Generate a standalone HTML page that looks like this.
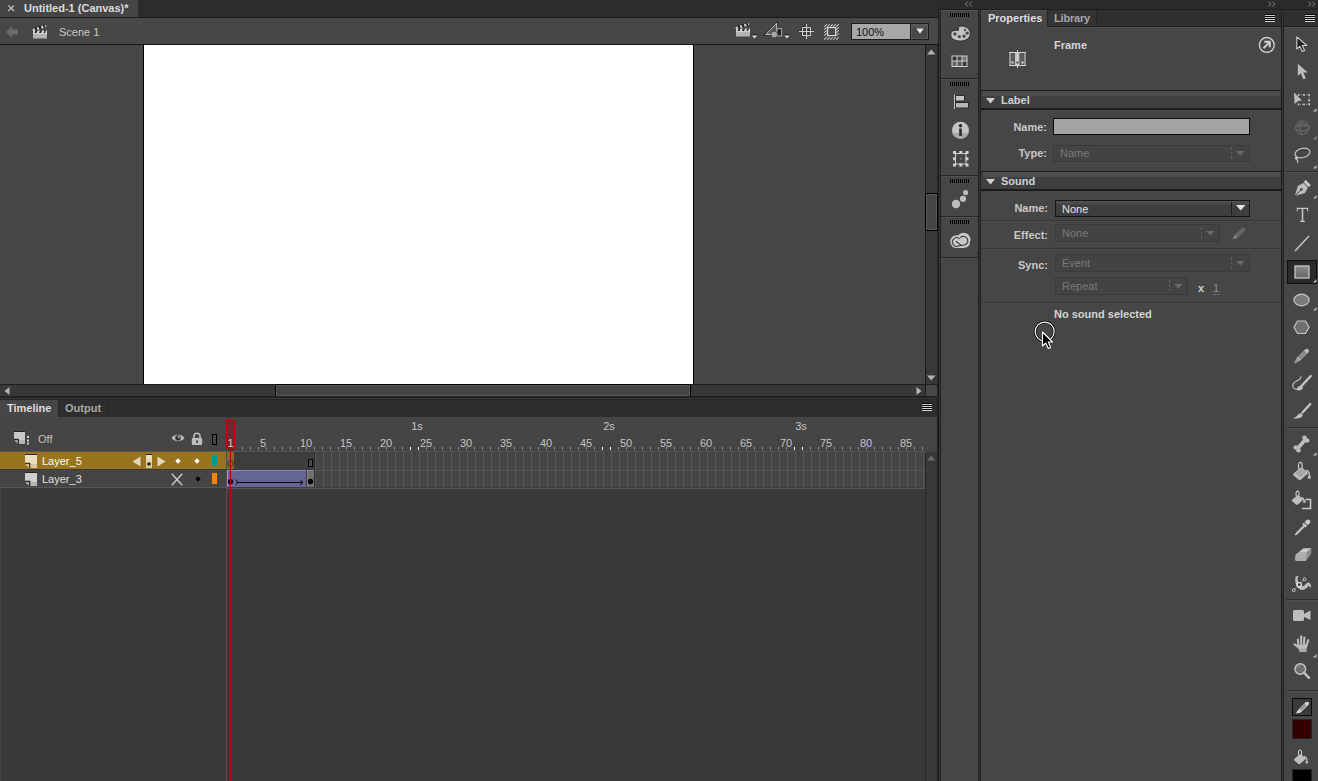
<!DOCTYPE html>
<html><head><meta charset="utf-8">
<style>
*{margin:0;padding:0;box-sizing:border-box}
html,body{width:1318px;height:781px;overflow:hidden;background:#2b2b2b;font-family:"Liberation Sans",sans-serif;font-size:11px;color:#d0d0d0}
.a{position:absolute}
.t{position:absolute;white-space:nowrap;line-height:1}
svg{position:absolute;overflow:visible}
.b{font-weight:bold}
</style></head><body>
<!-- ========== LEFT: document tab bar ========== -->
<div class="a" style="left:0;top:0;width:938px;height:17px;background:#2c2c2c"></div>
<div class="a" style="left:0;top:0;width:138px;height:17px;background:#454545"></div>
<svg style="left:7px;top:4px" width="8" height="8"><path d="M1.3 1.3L7 7M7 1.3L1.3 7" stroke="#c4c4c4" stroke-width="1.2"/></svg>
<div class="t b" style="left:24px;top:3px;color:#dcdcdc">Untitled-1 (Canvas)*</div>
<div class="a" style="left:0;top:17px;width:938px;height:1px;background:#1c1c1c"></div>
<!-- main toolbar -->
<div class="a" style="left:0;top:18px;width:938px;height:26px;background:#474747"></div>
<svg style="left:6px;top:26px" width="13" height="12"><path d="M0 6L6 0V3.5H12V8.5H6V12Z" fill="#6b6b6b"/></svg>
<svg style="left:31px;top:23px" width="18" height="17">
 <path d="M2 10H16V15.5H2Z" fill="#b4b4b4"/><path d="M2 10H16V11H2Z" fill="#d0d0d0"/>
 <path d="M2 7.6H16V10H2Z" fill="#1e1e1e"/>
 <path d="M2 7.6H4.5L3.5 10H2Z M6.5 7.6H9L8 10H5.5Z M11 7.6H13.5L12.5 10H10Z M15 7.6H16V10H14Z" fill="#d8d8d8"/>
 <path d="M1 5.5L14.5 1.2L15.5 4L2 8.3Z" fill="#1e1e1e"/>
 <path d="M1.3 6L3.5 5.3L4.5 7.8L2.1 8.3Z M5.5 4.6L7.6 4L8.6 6.5L6.5 7.1Z M9.7 3.3L11.8 2.6L12.8 5.1L10.7 5.8Z M13.5 2L14.5 1.7L15.4 4L14.5 4.4Z" fill="#d0d0d0"/>
</svg>
<div class="t" style="left:59px;top:27px;color:#c8c8c8">Scene 1</div>
<!-- right toolbar icons -->
<svg style="left:734px;top:21px" width="26" height="20">
 <path d="M2 10H16V15.5H2Z" fill="#b4b4b4"/><path d="M2 10H16V11H2Z" fill="#d0d0d0"/>
 <path d="M2 7.6H16V10H2Z" fill="#1e1e1e"/>
 <path d="M2 7.6H4.5L3.5 10H2Z M6.5 7.6H9L8 10H5.5Z M11 7.6H13.5L12.5 10H10Z M15 7.6H16V10H14Z" fill="#d8d8d8"/>
 <path d="M1 5.5L14.5 1.2L15.5 4L2 8.3Z" fill="#1e1e1e"/>
 <path d="M1.3 6L3.5 5.3L4.5 7.8L2.1 8.3Z M5.5 4.6L7.6 4L8.6 6.5L6.5 7.1Z M9.7 3.3L11.8 2.6L12.8 5.1L10.7 5.8Z M13.5 2L14.5 1.7L15.4 4L14.5 4.4Z" fill="#d0d0d0"/>
 <path d="M17.5 13.8H23.5" stroke="#1e1e1e" stroke-width="1"/><path d="M17.8 14.5H23.2L20.5 17.5Z" fill="#d8d8d8"/>
</svg>
<svg style="left:764px;top:21px" width="27" height="20">
 <path d="M1.8 13.5L12.6 2.2V13.5Z" fill="#555" stroke="#1e1e1e" stroke-width="2"/>
 <path d="M1.8 13.5L12.6 2.2V13.5Z" fill="#5a5a5a" stroke="#c4c4c4" stroke-width="1"/>
 <rect x="12.9" y="7.7" width="4.7" height="7.2" fill="#222" stroke="#aaa" stroke-width="1"/>
 <circle cx="10.3" cy="13.5" r="3.3" fill="#a8a8a8" stroke="#1e1e1e" stroke-width="0.5"/>
 <path d="M20 13.8H26" stroke="#1e1e1e" stroke-width="1"/><path d="M20.3 14.5H25.7L23 17.5Z" fill="#d8d8d8"/>
</svg>
<svg style="left:798px;top:23px" width="18" height="18">
 <path d="M4.5 4.5H12.5V12.5H4.5Z M8.5 1V16 M1 8.5H16" fill="none" stroke="#111" stroke-width="1" opacity="0.6" transform="translate(-0.6,-0.6)"/>
 <path d="M4.5 4.5H12.5V12.5H4.5Z M8.5 1V16 M1 8.5H16" fill="none" stroke="#d2d2d2" stroke-width="1"/>
</svg>
<svg style="left:824px;top:24px" width="16" height="16">
 <path d="M0.5 15.5L15.5 0.5" stroke="#444" stroke-width="0"/>
 <g stroke="#c8c8c8" stroke-width="1.1">
  <path d="M0.3 2.7L2.7 0.3M3.3 2.7L5.7 0.3M6.3 2.7L8.7 0.3M9.3 2.7L11.7 0.3M12.3 2.7L14.7 0.3"/>
  <path d="M0.3 15.7L2.7 13.3M3.3 15.7L5.7 13.3M6.3 15.7L8.7 13.3M9.3 15.7L11.7 13.3M12.3 15.7L14.7 13.3"/>
  <path d="M0.3 5.7L2.7 3.3M0.3 8.7L2.7 6.3M0.3 11.7L2.7 9.3"/>
  <path d="M12.3 5.7L14.7 3.3M12.3 8.7L14.7 6.3M12.3 11.7L14.7 9.3"/>
 </g>
 <rect x="3.6" y="3.6" width="8" height="8" fill="none" stroke="#d8d8d8" stroke-width="1.2"/>
</svg>
<div class="a" style="left:851px;top:23px;width:78px;height:17px;background:#1c1c1c"></div>
<div class="a" style="left:852px;top:24px;width:58px;height:15px;background:#a8a8a8"></div>
<div class="a" style="left:911px;top:24px;width:17px;height:15px;background:linear-gradient(#555 0,#555 3px,#474747 4px);box-shadow:inset 0 0 0 1px #5a5a5a"></div>
<svg style="left:916px;top:28px" width="9" height="7"><path d="M0.2 0.5H7.8L4 5.8Z" fill="#e6e6e6"/></svg>
<div class="t" style="left:856px;top:27px;color:#111">100%</div>
<div class="a" style="left:0;top:44px;width:938px;height:1px;background:#161616"></div>
<!-- stage area -->
<div class="a" style="left:0;top:45px;width:925px;height:339px;background:#464646"></div>
<div class="a" style="left:143px;top:45px;width:551px;height:339px;background:#000"></div>
<div class="a" style="left:144px;top:45px;width:549px;height:339px;background:#fff"></div>
<!-- v scrollbar -->
<div class="a" style="left:925px;top:45px;width:13px;height:340px;background:#383838"></div>
<div class="a" style="left:937px;top:45px;width:1px;height:355px;background:#262626"></div>
<svg style="left:927px;top:49px" width="9" height="6"><path d="M0 5.5H8.5L4.25 0.5Z" fill="#b4b4b4"/></svg>
<div class="a" style="left:925px;top:45px;width:1px;height:340px;background:#1e1e1e"></div>
<div class="a" style="left:925px;top:193px;width:13px;height:38px;background:#454545;border:1px solid #000;box-shadow:inset 0 0 0 1px #595959"></div>
<svg style="left:927px;top:375px" width="9" height="6"><path d="M0 0.5H8.5L4.25 5.5Z" fill="#b4b4b4"/></svg>
<!-- h scrollbar -->
<div class="a" style="left:0;top:384px;width:938px;height:1px;background:#1e1e1e"></div>
<div class="a" style="left:0;top:385px;width:925px;height:11px;background:#383838"></div>
<svg style="left:4px;top:387px" width="6" height="8"><path d="M5.5 0V8L0.5 4Z" fill="#b4b4b4"/></svg>
<div class="a" style="left:275px;top:384px;width:416px;height:13px;background:#454545;border:1px solid #000;box-shadow:inset 0 0 0 1px #595959"></div>
<svg style="left:916px;top:387px" width="6" height="8"><path d="M0.5 0V8L5.5 4Z" fill="#b4b4b4"/></svg>
<div class="a" style="left:925px;top:384px;width:13px;height:13px;background:#474747;border:1px solid #1e1e1e"></div>
<div class="a" style="left:0;top:396px;width:938px;height:2px;background:#222"></div>
<div class="a" style="left:0;top:398px;width:938px;height:1px;background:#383838"></div>
<div class="a" style="left:0;top:399px;width:938px;height:1px;background:#262626"></div>
<!-- timeline tab bar -->
<div class="a" style="left:0;top:400px;width:938px;height:17px;background:#2e2e2e"></div>
<div class="a" style="left:0;top:400px;width:58px;height:17px;background:#464646"></div>
<div class="a" style="left:58px;top:400px;width:1px;height:17px;background:#262626"></div>
<div class="a" style="left:107px;top:400px;width:1px;height:17px;background:#262626"></div>
<div class="t b" style="left:7px;top:403px;color:#dcdcdc">Timeline</div>
<div class="t b" style="left:65px;top:403px;color:#a8a8a8">Output</div>
<svg style="left:922px;top:403px" width="11" height="9"><path d="M0 0.5H10M0 2.5H10M0 4.5H10M0 6.5H10" stroke="#000" stroke-width="1"/><path d="M0 1.5H10M0 3.5H10M0 5.5H10M0 7.5H10" stroke="#d0d0d0" stroke-width="1"/></svg>
<!-- timeline body -->
<div class="a" style="left:0;top:417px;width:938px;height:364px;background:#393939"></div>
<div class="a" style="left:0;top:488px;width:1px;height:293px;background:#464646"></div>
<div class="a" style="left:0;top:417px;width:925px;height:35px;background:#454545"></div>
<!-- header icons -->
<svg style="left:13px;top:431px" width="18" height="14">
 <rect x="1" y="0" width="11" height="1" fill="#222"/>
 <path d="M1 1H12V13H5.5V8H1Z" fill="#c8c8c8"/><rect x="5.5" y="9" width="6.5" height="4" fill="#b4b4b4"/>
 <path d="M1 7.8H5.8V13H4.8V8.8H1Z" fill="#222"/><path d="M1.3 9.2H4.5V12.6Z" fill="#c0c0c0"/>
 <rect x="14" y="5" width="2" height="2" fill="#d0d0d0"/><rect x="14" y="8.5" width="2" height="2" fill="#d0d0d0"/><rect x="14" y="11.5" width="2" height="2" fill="#d0d0d0"/>
</svg>
<div class="t" style="left:38px;top:434px;color:#c0c0c0">Off</div>
<svg style="left:171px;top:433px" width="14" height="10">
 <path d="M0.7 5C3 0.8 11 0.8 13.3 5C11 9.2 3 9.2 0.7 5Z" fill="#bdbdbd"/>
 <circle cx="7" cy="5" r="2.8" fill="#3a3a3a"/><circle cx="7.8" cy="4" r="0.9" fill="#bdbdbd"/>
</svg>
<svg style="left:191px;top:432px" width="12" height="14">
 <path d="M3 6.5V4.2A3 3 0 0 1 9 4.2V6.5" fill="none" stroke="#bdbdbd" stroke-width="1.6"/>
 <rect x="0.8" y="6" width="10.4" height="7" rx="1" fill="#bdbdbd"/>
 <rect x="5.3" y="8.3" width="1.5" height="2.6" fill="#333"/>
</svg>
<div class="a" style="left:212px;top:434px;width:5px;height:11px;border:1px solid #000"></div>

<div class="t" style="left:260px;top:438px;color:#c4c4c4">5</div>
<div class="t" style="left:300px;top:438px;color:#c4c4c4">10</div>
<div class="t" style="left:340px;top:438px;color:#c4c4c4">15</div>
<div class="t" style="left:380px;top:438px;color:#c4c4c4">20</div>
<div class="t" style="left:420px;top:438px;color:#c4c4c4">25</div>
<div class="t" style="left:460px;top:438px;color:#c4c4c4">30</div>
<div class="t" style="left:500px;top:438px;color:#c4c4c4">35</div>
<div class="t" style="left:540px;top:438px;color:#c4c4c4">40</div>
<div class="t" style="left:580px;top:438px;color:#c4c4c4">45</div>
<div class="t" style="left:620px;top:438px;color:#c4c4c4">50</div>
<div class="t" style="left:660px;top:438px;color:#c4c4c4">55</div>
<div class="t" style="left:700px;top:438px;color:#c4c4c4">60</div>
<div class="t" style="left:740px;top:438px;color:#c4c4c4">65</div>
<div class="t" style="left:780px;top:438px;color:#c4c4c4">70</div>
<div class="t" style="left:820px;top:438px;color:#c4c4c4">75</div>
<div class="t" style="left:860px;top:438px;color:#c4c4c4">80</div>
<div class="t" style="left:900px;top:438px;color:#c4c4c4">85</div>
<div class="a" style="left:234px;top:447px;width:1px;height:3px;background:#8a8a8a"></div>
<div class="a" style="left:242px;top:447px;width:1px;height:3px;background:#8a8a8a"></div>
<div class="a" style="left:250px;top:447px;width:1px;height:3px;background:#8a8a8a"></div>
<div class="a" style="left:258px;top:447px;width:1px;height:3px;background:#8a8a8a"></div>
<div class="a" style="left:266px;top:447px;width:1px;height:3px;background:#8a8a8a"></div>
<div class="a" style="left:274px;top:447px;width:1px;height:3px;background:#8a8a8a"></div>
<div class="a" style="left:282px;top:447px;width:1px;height:3px;background:#8a8a8a"></div>
<div class="a" style="left:290px;top:447px;width:1px;height:3px;background:#8a8a8a"></div>
<div class="a" style="left:298px;top:447px;width:1px;height:3px;background:#8a8a8a"></div>
<div class="a" style="left:306px;top:447px;width:1px;height:3px;background:#8a8a8a"></div>
<div class="a" style="left:314px;top:447px;width:1px;height:3px;background:#8a8a8a"></div>
<div class="a" style="left:322px;top:447px;width:1px;height:3px;background:#8a8a8a"></div>
<div class="a" style="left:330px;top:447px;width:1px;height:3px;background:#8a8a8a"></div>
<div class="a" style="left:338px;top:447px;width:1px;height:3px;background:#8a8a8a"></div>
<div class="a" style="left:346px;top:447px;width:1px;height:3px;background:#8a8a8a"></div>
<div class="a" style="left:354px;top:447px;width:1px;height:3px;background:#8a8a8a"></div>
<div class="a" style="left:362px;top:447px;width:1px;height:3px;background:#8a8a8a"></div>
<div class="a" style="left:370px;top:447px;width:1px;height:3px;background:#8a8a8a"></div>
<div class="a" style="left:378px;top:447px;width:1px;height:3px;background:#8a8a8a"></div>
<div class="a" style="left:386px;top:447px;width:1px;height:3px;background:#8a8a8a"></div>
<div class="a" style="left:394px;top:447px;width:1px;height:3px;background:#8a8a8a"></div>
<div class="a" style="left:402px;top:447px;width:1px;height:3px;background:#8a8a8a"></div>
<div class="a" style="left:410px;top:447px;width:1px;height:3px;background:#fff"></div>
<div class="a" style="left:418px;top:447px;width:1px;height:3px;background:#fff"></div>
<div class="a" style="left:426px;top:447px;width:1px;height:3px;background:#8a8a8a"></div>
<div class="a" style="left:434px;top:447px;width:1px;height:3px;background:#8a8a8a"></div>
<div class="a" style="left:442px;top:447px;width:1px;height:3px;background:#8a8a8a"></div>
<div class="a" style="left:450px;top:447px;width:1px;height:3px;background:#8a8a8a"></div>
<div class="a" style="left:458px;top:447px;width:1px;height:3px;background:#8a8a8a"></div>
<div class="a" style="left:466px;top:447px;width:1px;height:3px;background:#8a8a8a"></div>
<div class="a" style="left:474px;top:447px;width:1px;height:3px;background:#8a8a8a"></div>
<div class="a" style="left:482px;top:447px;width:1px;height:3px;background:#8a8a8a"></div>
<div class="a" style="left:490px;top:447px;width:1px;height:3px;background:#8a8a8a"></div>
<div class="a" style="left:498px;top:447px;width:1px;height:3px;background:#8a8a8a"></div>
<div class="a" style="left:506px;top:447px;width:1px;height:3px;background:#8a8a8a"></div>
<div class="a" style="left:514px;top:447px;width:1px;height:3px;background:#8a8a8a"></div>
<div class="a" style="left:522px;top:447px;width:1px;height:3px;background:#8a8a8a"></div>
<div class="a" style="left:530px;top:447px;width:1px;height:3px;background:#8a8a8a"></div>
<div class="a" style="left:538px;top:447px;width:1px;height:3px;background:#8a8a8a"></div>
<div class="a" style="left:546px;top:447px;width:1px;height:3px;background:#8a8a8a"></div>
<div class="a" style="left:554px;top:447px;width:1px;height:3px;background:#8a8a8a"></div>
<div class="a" style="left:562px;top:447px;width:1px;height:3px;background:#8a8a8a"></div>
<div class="a" style="left:570px;top:447px;width:1px;height:3px;background:#8a8a8a"></div>
<div class="a" style="left:578px;top:447px;width:1px;height:3px;background:#8a8a8a"></div>
<div class="a" style="left:586px;top:447px;width:1px;height:3px;background:#8a8a8a"></div>
<div class="a" style="left:594px;top:447px;width:1px;height:3px;background:#8a8a8a"></div>
<div class="a" style="left:602px;top:447px;width:1px;height:3px;background:#fff"></div>
<div class="a" style="left:610px;top:447px;width:1px;height:3px;background:#fff"></div>
<div class="a" style="left:618px;top:447px;width:1px;height:3px;background:#8a8a8a"></div>
<div class="a" style="left:626px;top:447px;width:1px;height:3px;background:#8a8a8a"></div>
<div class="a" style="left:634px;top:447px;width:1px;height:3px;background:#8a8a8a"></div>
<div class="a" style="left:642px;top:447px;width:1px;height:3px;background:#8a8a8a"></div>
<div class="a" style="left:650px;top:447px;width:1px;height:3px;background:#8a8a8a"></div>
<div class="a" style="left:658px;top:447px;width:1px;height:3px;background:#8a8a8a"></div>
<div class="a" style="left:666px;top:447px;width:1px;height:3px;background:#8a8a8a"></div>
<div class="a" style="left:674px;top:447px;width:1px;height:3px;background:#8a8a8a"></div>
<div class="a" style="left:682px;top:447px;width:1px;height:3px;background:#8a8a8a"></div>
<div class="a" style="left:690px;top:447px;width:1px;height:3px;background:#8a8a8a"></div>
<div class="a" style="left:698px;top:447px;width:1px;height:3px;background:#8a8a8a"></div>
<div class="a" style="left:706px;top:447px;width:1px;height:3px;background:#8a8a8a"></div>
<div class="a" style="left:714px;top:447px;width:1px;height:3px;background:#8a8a8a"></div>
<div class="a" style="left:722px;top:447px;width:1px;height:3px;background:#8a8a8a"></div>
<div class="a" style="left:730px;top:447px;width:1px;height:3px;background:#8a8a8a"></div>
<div class="a" style="left:738px;top:447px;width:1px;height:3px;background:#8a8a8a"></div>
<div class="a" style="left:746px;top:447px;width:1px;height:3px;background:#8a8a8a"></div>
<div class="a" style="left:754px;top:447px;width:1px;height:3px;background:#8a8a8a"></div>
<div class="a" style="left:762px;top:447px;width:1px;height:3px;background:#8a8a8a"></div>
<div class="a" style="left:770px;top:447px;width:1px;height:3px;background:#8a8a8a"></div>
<div class="a" style="left:778px;top:447px;width:1px;height:3px;background:#8a8a8a"></div>
<div class="a" style="left:786px;top:447px;width:1px;height:3px;background:#8a8a8a"></div>
<div class="a" style="left:794px;top:447px;width:1px;height:3px;background:#fff"></div>
<div class="a" style="left:802px;top:447px;width:1px;height:3px;background:#fff"></div>
<div class="a" style="left:810px;top:447px;width:1px;height:3px;background:#8a8a8a"></div>
<div class="a" style="left:818px;top:447px;width:1px;height:3px;background:#8a8a8a"></div>
<div class="a" style="left:826px;top:447px;width:1px;height:3px;background:#8a8a8a"></div>
<div class="a" style="left:834px;top:447px;width:1px;height:3px;background:#8a8a8a"></div>
<div class="a" style="left:842px;top:447px;width:1px;height:3px;background:#8a8a8a"></div>
<div class="a" style="left:850px;top:447px;width:1px;height:3px;background:#8a8a8a"></div>
<div class="a" style="left:858px;top:447px;width:1px;height:3px;background:#8a8a8a"></div>
<div class="a" style="left:866px;top:447px;width:1px;height:3px;background:#8a8a8a"></div>
<div class="a" style="left:874px;top:447px;width:1px;height:3px;background:#8a8a8a"></div>
<div class="a" style="left:882px;top:447px;width:1px;height:3px;background:#8a8a8a"></div>
<div class="a" style="left:890px;top:447px;width:1px;height:3px;background:#8a8a8a"></div>
<div class="a" style="left:898px;top:447px;width:1px;height:3px;background:#8a8a8a"></div>
<div class="a" style="left:906px;top:447px;width:1px;height:3px;background:#8a8a8a"></div>
<div class="a" style="left:914px;top:447px;width:1px;height:3px;background:#8a8a8a"></div>
<div class="a" style="left:922px;top:447px;width:1px;height:3px;background:#8a8a8a"></div>
<div class="t" style="left:377px;width:80px;text-align:center;top:421px;color:#c4c4c4">1s</div>
<div class="t" style="left:569px;width:80px;text-align:center;top:421px;color:#c4c4c4">2s</div>
<div class="t" style="left:761px;width:80px;text-align:center;top:421px;color:#c4c4c4">3s</div>
<div class="a" style="left:0;top:451px;width:925px;height:1px;background:#575757"></div>
<div class="a" style="left:411px;top:451px;width:7px;height:1px;background:#454545"></div>
<div class="a" style="left:603px;top:451px;width:7px;height:1px;background:#454545"></div>
<div class="a" style="left:795px;top:451px;width:7px;height:1px;background:#454545"></div>
<div class="a" style="left:0;top:452px;width:226px;height:17px;background:#98741e"></div>
<div class="a" style="left:0;top:469px;width:226px;height:1px;background:#3a3a3a"></div>
<div class="a" style="left:0;top:470px;width:226px;height:17px;background:#454545"></div>
<div class="a" style="left:0;top:487px;width:226px;height:1px;background:#575757"></div>
<div class="a" style="left:226px;top:452px;width:1px;height:329px;background:#505050"></div>

<div class="a" style="left:227px;top:452px;width:698px;height:36px;background:#454545"></div>
<div class="a" style="left:227px;top:487px;width:698px;height:1px;background:#3c3c3c"></div>
<div class="a" style="left:315px;top:452px;width:1px;height:36px;background:#555"></div>
<div class="a" style="left:323px;top:452px;width:1px;height:36px;background:#555"></div>
<div class="a" style="left:331px;top:452px;width:1px;height:36px;background:#555"></div>
<div class="a" style="left:339px;top:452px;width:1px;height:36px;background:#555"></div>
<div class="a" style="left:347px;top:452px;width:1px;height:36px;background:#555"></div>
<div class="a" style="left:355px;top:452px;width:1px;height:36px;background:#555"></div>
<div class="a" style="left:363px;top:452px;width:1px;height:36px;background:#555"></div>
<div class="a" style="left:371px;top:452px;width:1px;height:36px;background:#555"></div>
<div class="a" style="left:379px;top:452px;width:1px;height:36px;background:#555"></div>
<div class="a" style="left:387px;top:452px;width:1px;height:36px;background:#555"></div>
<div class="a" style="left:395px;top:452px;width:1px;height:36px;background:#555"></div>
<div class="a" style="left:403px;top:452px;width:1px;height:36px;background:#555"></div>
<div class="a" style="left:411px;top:452px;width:1px;height:36px;background:#555"></div>
<div class="a" style="left:419px;top:452px;width:1px;height:36px;background:#555"></div>
<div class="a" style="left:427px;top:452px;width:1px;height:36px;background:#555"></div>
<div class="a" style="left:435px;top:452px;width:1px;height:36px;background:#555"></div>
<div class="a" style="left:443px;top:452px;width:1px;height:36px;background:#555"></div>
<div class="a" style="left:451px;top:452px;width:1px;height:36px;background:#555"></div>
<div class="a" style="left:459px;top:452px;width:1px;height:36px;background:#555"></div>
<div class="a" style="left:467px;top:452px;width:1px;height:36px;background:#555"></div>
<div class="a" style="left:475px;top:452px;width:1px;height:36px;background:#555"></div>
<div class="a" style="left:483px;top:452px;width:1px;height:36px;background:#555"></div>
<div class="a" style="left:491px;top:452px;width:1px;height:36px;background:#555"></div>
<div class="a" style="left:499px;top:452px;width:1px;height:36px;background:#555"></div>
<div class="a" style="left:507px;top:452px;width:1px;height:36px;background:#555"></div>
<div class="a" style="left:515px;top:452px;width:1px;height:36px;background:#555"></div>
<div class="a" style="left:523px;top:452px;width:1px;height:36px;background:#555"></div>
<div class="a" style="left:531px;top:452px;width:1px;height:36px;background:#555"></div>
<div class="a" style="left:539px;top:452px;width:1px;height:36px;background:#555"></div>
<div class="a" style="left:547px;top:452px;width:1px;height:36px;background:#555"></div>
<div class="a" style="left:555px;top:452px;width:1px;height:36px;background:#555"></div>
<div class="a" style="left:563px;top:452px;width:1px;height:36px;background:#555"></div>
<div class="a" style="left:571px;top:452px;width:1px;height:36px;background:#555"></div>
<div class="a" style="left:579px;top:452px;width:1px;height:36px;background:#555"></div>
<div class="a" style="left:587px;top:452px;width:1px;height:36px;background:#555"></div>
<div class="a" style="left:595px;top:452px;width:1px;height:36px;background:#555"></div>
<div class="a" style="left:603px;top:452px;width:1px;height:36px;background:#555"></div>
<div class="a" style="left:611px;top:452px;width:1px;height:36px;background:#555"></div>
<div class="a" style="left:619px;top:452px;width:1px;height:36px;background:#555"></div>
<div class="a" style="left:627px;top:452px;width:1px;height:36px;background:#555"></div>
<div class="a" style="left:635px;top:452px;width:1px;height:36px;background:#555"></div>
<div class="a" style="left:643px;top:452px;width:1px;height:36px;background:#555"></div>
<div class="a" style="left:651px;top:452px;width:1px;height:36px;background:#555"></div>
<div class="a" style="left:659px;top:452px;width:1px;height:36px;background:#555"></div>
<div class="a" style="left:667px;top:452px;width:1px;height:36px;background:#555"></div>
<div class="a" style="left:675px;top:452px;width:1px;height:36px;background:#555"></div>
<div class="a" style="left:683px;top:452px;width:1px;height:36px;background:#555"></div>
<div class="a" style="left:691px;top:452px;width:1px;height:36px;background:#555"></div>
<div class="a" style="left:699px;top:452px;width:1px;height:36px;background:#555"></div>
<div class="a" style="left:707px;top:452px;width:1px;height:36px;background:#555"></div>
<div class="a" style="left:715px;top:452px;width:1px;height:36px;background:#555"></div>
<div class="a" style="left:723px;top:452px;width:1px;height:36px;background:#555"></div>
<div class="a" style="left:731px;top:452px;width:1px;height:36px;background:#555"></div>
<div class="a" style="left:739px;top:452px;width:1px;height:36px;background:#555"></div>
<div class="a" style="left:747px;top:452px;width:1px;height:36px;background:#555"></div>
<div class="a" style="left:755px;top:452px;width:1px;height:36px;background:#555"></div>
<div class="a" style="left:763px;top:452px;width:1px;height:36px;background:#555"></div>
<div class="a" style="left:771px;top:452px;width:1px;height:36px;background:#555"></div>
<div class="a" style="left:779px;top:452px;width:1px;height:36px;background:#555"></div>
<div class="a" style="left:787px;top:452px;width:1px;height:36px;background:#555"></div>
<div class="a" style="left:795px;top:452px;width:1px;height:36px;background:#555"></div>
<div class="a" style="left:803px;top:452px;width:1px;height:36px;background:#555"></div>
<div class="a" style="left:811px;top:452px;width:1px;height:36px;background:#555"></div>
<div class="a" style="left:819px;top:452px;width:1px;height:36px;background:#555"></div>
<div class="a" style="left:827px;top:452px;width:1px;height:36px;background:#555"></div>
<div class="a" style="left:835px;top:452px;width:1px;height:36px;background:#555"></div>
<div class="a" style="left:843px;top:452px;width:1px;height:36px;background:#555"></div>
<div class="a" style="left:851px;top:452px;width:1px;height:36px;background:#555"></div>
<div class="a" style="left:859px;top:452px;width:1px;height:36px;background:#555"></div>
<div class="a" style="left:867px;top:452px;width:1px;height:36px;background:#555"></div>
<div class="a" style="left:875px;top:452px;width:1px;height:36px;background:#555"></div>
<div class="a" style="left:883px;top:452px;width:1px;height:36px;background:#555"></div>
<div class="a" style="left:891px;top:452px;width:1px;height:36px;background:#555"></div>
<div class="a" style="left:899px;top:452px;width:1px;height:36px;background:#555"></div>
<div class="a" style="left:907px;top:452px;width:1px;height:36px;background:#555"></div>
<div class="a" style="left:915px;top:452px;width:1px;height:36px;background:#555"></div>
<div class="a" style="left:923px;top:452px;width:1px;height:36px;background:#555"></div>
<div class="a" style="left:315px;top:470px;width:610px;height:1px;background:#535353"></div>
<div class="a" style="left:227px;top:488px;width:698px;height:1px;background:#575757"></div>
<div class="a" style="left:227px;top:452px;width:87px;height:18px;background:#3d3d3d"></div>
<div class="a" style="left:314px;top:452px;width:1px;height:36px;background:#2a2a2a"></div>
<div class="a" style="left:227px;top:452px;width:7px;height:17px;background:#8a6a22"></div>
<svg style="left:226px;top:459px" width="9" height="9"><circle cx="4.5" cy="4.5" r="2.8" fill="none" stroke="#3a2f14" stroke-width="1"/></svg>
<div class="a" style="left:308px;top:459px;width:5px;height:8px;border:1px solid #000;background:#4a4a4a"></div>
<div class="a" style="left:227px;top:470px;width:79px;height:17px;background:#656594;border-top:1px solid #8a8ab4;border-left:1px solid #9a9ac8"></div>
<div class="a" style="left:306px;top:470px;width:1px;height:17px;background:#3a3a3a"></div>
<div class="a" style="left:307px;top:470px;width:7px;height:17px;background:#717171;border-top:1px solid #8a8a8a;border-left:1px solid #858585"></div>
<svg style="left:226px;top:477px" width="9" height="9"><circle cx="4.5" cy="4.5" r="2.6" fill="#000"/></svg>
<svg style="left:306px;top:477px" width="9" height="9"><circle cx="4.5" cy="4.5" r="2.7" fill="#000"/></svg>
<svg style="left:235px;top:478px" width="70" height="8"><path d="M0.5 1.5L3 4.5L0.5 7M2 4.5H68M65 2L68 4.5L65 7" fill="none" stroke="#000" stroke-width="0.9"/></svg>

<svg style="left:25px;top:454px" width="13" height="14"><rect x="0" y="0" width="12" height="1" fill="#2a2a2a"/><path d="M0 1H12V14H5V9H0Z" fill="#ecdfc0"/><rect x="5" y="10" width="7" height="4" fill="#d8c8a0"/><path d="M0 8.8H5.3V14H4.3V9.8H0Z" fill="#2a2418"/><path d="M0.3 10.2H3.9V13.6Z" fill="#e0d2b0"/></svg>
<div class="t" style="left:42px;top:456px;color:#fafafa">Layer_5</div>
<svg style="left:132px;top:456px" width="9" height="11"><path d="M8.5 0.5V10.5L0.5 5.5Z" fill="#e6d9b8"/></svg>
<div class="a" style="left:146px;top:454px;width:6px;height:14px;background:linear-gradient(#eee2c4,#d8c8a0);border-top:1px solid #2a2a2a"></div>
<svg style="left:146px;top:461px" width="7" height="7"><circle cx="3" cy="3" r="1.8" fill="#2a2418"/></svg>
<svg style="left:157px;top:456px" width="9" height="11"><path d="M0.5 0.5V10.5L8.5 5.5Z" fill="#e6d9b8"/></svg>
<svg style="left:175px;top:458px" width="6" height="6"><path d="M3 0.3L5.7 3L3 5.7L0.3 3Z" fill="#fff"/></svg>
<svg style="left:194px;top:458px" width="6" height="6"><path d="M3 0.3L5.7 3L3 5.7L0.3 3Z" fill="#fff"/></svg>
<div class="a" style="left:212px;top:455px;width:5px;height:11px;background:#00999c"></div>
<svg style="left:25px;top:472px" width="13" height="14"><rect x="0" y="0" width="12" height="1" fill="#222"/><path d="M0 1H12V14H5V9H0Z" fill="#cfcfcf"/><rect x="5" y="10" width="7" height="4" fill="#b4b4b4"/><path d="M0 8.8H5.3V14H4.3V9.8H0Z" fill="#222"/><path d="M0.3 10.2H3.9V13.6Z" fill="#c4c4c4"/></svg>
<div class="t" style="left:42px;top:474px;color:#e2e2e2">Layer_3</div>
<svg style="left:171px;top:473px" width="12" height="13"><path d="M0.8 0.8L11.2 12.2M11.2 0.8L0.8 12.2" stroke="#cfcfcf" stroke-width="1.3"/></svg>
<svg style="left:195px;top:476px" width="6" height="6"><path d="M3 0.3L5.7 3L3 5.7L0.3 3Z" fill="#000"/></svg>
<div class="a" style="left:212px;top:473px;width:5px;height:11px;background:#ff8200"></div>

<div class="a" style="left:226px;top:420px;width:9px;height:30px;background:rgba(110,40,40,0.85);border:1px solid #c00000"></div>
<div class="t" style="left:226px;width:9px;text-align:center;top:438px;color:#e0d0c8">1</div>
<div class="a" style="left:230px;top:450px;width:1px;height:331px;background:#b40000"></div>

<div class="a" style="left:925px;top:417px;width:13px;height:364px;background:#454545"></div>
<div class="a" style="left:925px;top:452px;width:1px;height:329px;background:#2a2a2a"></div>
<div class="a" style="left:926px;top:452px;width:11px;height:329px;background:#383838"></div>
<div class="a" style="left:937px;top:400px;width:1px;height:381px;background:#1e1e1e"></div>
<svg style="left:927px;top:455px" width="9" height="6"><path d="M0 5.5H8.5L4.25 0.5Z" fill="#6a6a6a"/></svg>
<!-- ========== RIGHT SIDE ========== -->
<div class="a" style="left:938px;top:0;width:380px;height:781px;background:#2a2a2a"></div>
<div class="a" style="left:938px;top:10px;width:1px;height:771px;background:#1e1e1e"></div>
<div class="a" style="left:939px;top:10px;width:1px;height:771px;background:#343434"></div>
<div class="a" style="left:940px;top:10px;width:1px;height:771px;background:#222"></div>
<div class="a" style="left:938px;top:9px;width:380px;height:1px;background:#1e1e1e"></div>
<svg style="left:965px;top:1px" width="8" height="6"><path d="M2.8 0.8L0.5 3.2L2.8 5.6M6.8 0.8L4.5 3.2L6.8 5.6" fill="none" stroke="#8a8a8a" stroke-width="1"/></svg>
<svg style="left:1268px;top:1px" width="8" height="6"><path d="M0.5 0.8L2.8 3.2L0.5 5.6M4.5 0.8L6.8 3.2L4.5 5.6" fill="none" stroke="#8a8a8a" stroke-width="1"/></svg>
<svg style="left:1308px;top:1px" width="8" height="6"><path d="M0.5 0.8L2.8 3.2L0.5 5.6M4.5 0.8L6.8 3.2L4.5 5.6" fill="none" stroke="#8a8a8a" stroke-width="1"/></svg>
<!-- icon panel -->
<div class="a" style="left:941px;top:10px;width:37px;height:771px;background:#464646"></div>
<div class="a" style="left:941px;top:10px;width:37px;height:1px;background:#525252"></div>
<div class="a" style="left:941px;top:78px;width:37px;height:1px;background:#262626"></div>
<div class="a" style="left:941px;top:79px;width:37px;height:1px;background:#525252"></div>
<div class="a" style="left:941px;top:175px;width:37px;height:1px;background:#262626"></div>
<div class="a" style="left:941px;top:176px;width:37px;height:1px;background:#525252"></div>
<div class="a" style="left:941px;top:216px;width:37px;height:1px;background:#262626"></div>
<div class="a" style="left:941px;top:217px;width:37px;height:1px;background:#525252"></div>
<div class="a" style="left:941px;top:257px;width:37px;height:1px;background:#262626"></div>
<div class="a" style="left:941px;top:258px;width:37px;height:1px;background:#525252"></div>
<svg style="left:950px;top:13px" width="20" height="5"><path d="M0.5 0V4M2.5 0V4M4.5 0V4M6.5 0V4M8.5 0V4M10.5 0V4M12.5 0V4M14.5 0V4M16.5 0V4M18.5 0V4" stroke="#000" stroke-width="1"/></svg>
<svg style="left:950px;top:82px" width="20" height="5"><path d="M0.5 0V4M2.5 0V4M4.5 0V4M6.5 0V4M8.5 0V4M10.5 0V4M12.5 0V4M14.5 0V4M16.5 0V4M18.5 0V4" stroke="#000" stroke-width="1"/></svg>
<svg style="left:950px;top:179px" width="20" height="5"><path d="M0.5 0V4M2.5 0V4M4.5 0V4M6.5 0V4M8.5 0V4M10.5 0V4M12.5 0V4M14.5 0V4M16.5 0V4M18.5 0V4" stroke="#000" stroke-width="1"/></svg>
<svg style="left:950px;top:220px" width="20" height="5"><path d="M0.5 0V4M2.5 0V4M4.5 0V4M6.5 0V4M8.5 0V4M10.5 0V4M12.5 0V4M14.5 0V4M16.5 0V4M18.5 0V4" stroke="#000" stroke-width="1"/></svg>
<!-- palette -->
<svg style="left:945px;top:20px" width="30" height="26">
 <path d="M6.2 12.2C7 10.5 10 10.2 13.5 10.2C13 8.3 13.5 6.2 16 6C21 6 25.3 9 25.3 13.5C25.3 18 21 21 15.5 21C9.5 21 5.8 18.5 5.8 15C5.8 14 6 13 6.2 12.2Z" fill="#c2c2c2" stroke="#262626" stroke-width="0.9"/>
 <circle cx="9.9" cy="14" r="1.7" fill="#4a4a4a"/><circle cx="14.3" cy="16.6" r="1.6" fill="#4a4a4a"/><circle cx="19" cy="16.2" r="1.6" fill="#4a4a4a"/><circle cx="22.2" cy="13.2" r="1.6" fill="#4a4a4a"/><circle cx="20" cy="10" r="1.2" fill="#4a4a4a"/>
</svg>
<!-- swatches grid -->
<svg style="left:951px;top:55px" width="18" height="13">
 <rect x="0.5" y="0.5" width="16" height="11.5" fill="#d0d0d0"/>
 <rect x="1.5" y="1.5" width="4" height="4" fill="#333"/><rect x="6.5" y="1.5" width="4" height="4" fill="#444"/><rect x="11.5" y="1.5" width="4" height="4" fill="#777"/>
 <rect x="1.5" y="6.5" width="4" height="4.5" fill="#666"/><rect x="6.5" y="6.5" width="4" height="4.5" fill="#5a5a5a"/><rect x="11.5" y="6.5" width="4" height="4.5" fill="#3a3a3a"/>
</svg>
<!-- align -->
<svg style="left:953px;top:94px" width="17" height="16">
 <path d="M1.5 0.5V15" stroke="#c8c8c8" stroke-width="1"/>
 <rect x="2.5" y="1.5" width="9" height="5.5" fill="#c4c4c4" stroke="#2a2a2a" stroke-width="1"/><rect x="2.5" y="8.5" width="13" height="5.5" fill="#b8b8b8" stroke="#2a2a2a" stroke-width="1"/>
</svg>
<!-- info -->
<svg style="left:951px;top:121px" width="19" height="19">
 <circle cx="9.5" cy="9.3" r="8.5" fill="#c4c4c4"/>
 <path d="M1.5 12H17.5A8.5 8.5 0 0 1 1.5 12Z" fill="#a8a8a8"/>
 <circle cx="9.5" cy="4.8" r="1.7" fill="#2a2a2a"/><rect x="8.2" y="7.5" width="2.6" height="7.5" fill="#2a2a2a"/>
</svg>
<!-- transform -->
<svg style="left:953px;top:151px" width="16" height="16">
 <rect x="2.5" y="2.5" width="10.5" height="10.5" fill="none" stroke="#cfcfcf" stroke-width="1"/>
 <rect x="0" y="0" width="3" height="3" fill="#d0d0d0"/><rect x="6.3" y="0" width="3" height="3" fill="#d0d0d0"/><rect x="12.5" y="0" width="3" height="3" fill="#d0d0d0"/>
 <rect x="0" y="6.3" width="3" height="3" fill="#d0d0d0"/><rect x="12.5" y="6.3" width="3" height="3" fill="#d0d0d0"/>
 <rect x="0" y="12.5" width="3" height="3" fill="#d0d0d0"/><rect x="6.3" y="12.5" width="3" height="3" fill="#d0d0d0"/><rect x="12.5" y="12.5" width="3" height="3" fill="#d0d0d0"/>
 <rect x="7.3" y="7.3" width="1" height="1" fill="#d0d0d0"/>
</svg>
<!-- motion dots -->
<svg style="left:950px;top:188px" width="20" height="22">
 <circle cx="6" cy="16" r="4.2" fill="#bdbdbd"/><circle cx="13" cy="10.8" r="3.1" fill="#bdbdbd"/><circle cx="15.6" cy="4.5" r="2.6" fill="#bdbdbd"/>
</svg>
<!-- CC -->
<svg style="left:945px;top:226px" width="30" height="28">
 <circle cx="11.6" cy="15.6" r="6.4" fill="#c8c8c8"/>
 <circle cx="18.6" cy="13.6" r="6.9" fill="#c8c8c8"/>
 <rect x="11.6" y="13.6" width="7" height="8.4" fill="#c8c8c8"/><ellipse cx="18.6" cy="17.5" rx="6.2" ry="4.4" fill="#c8c8c8"/>
 <path d="M14.6 12.8A4.3 4.3 0 1 0 13.8 19.8L17.8 19.2A4.4 4.4 0 1 0 15.4 11.6" fill="none" stroke="#3a3a3a" stroke-width="1.1"/>
 <path d="M10.8 15.2L16.4 19.4" stroke="#3a3a3a" stroke-width="1.1"/>
</svg>
<!-- properties panel -->
<div class="a" style="left:978px;top:10px;width:1px;height:771px;background:#1e1e1e"></div>
<div class="a" style="left:979px;top:10px;width:1px;height:771px;background:#343434"></div>
<div class="a" style="left:980px;top:10px;width:1px;height:771px;background:#222"></div>
<div class="a" style="left:981px;top:10px;width:300px;height:771px;background:#464646"></div>
<div class="a" style="left:981px;top:10px;width:300px;height:17px;background:#2f2f2f"></div>
<div class="a" style="left:981px;top:10px;width:66px;height:17px;background:#464646;border-top:1px solid #525252"></div>
<div class="a" style="left:1047px;top:10px;width:1px;height:17px;background:#262626"></div>
<div class="a" style="left:1048px;top:10px;width:49px;height:17px;background:#343434"></div>
<div class="a" style="left:1096px;top:10px;width:1px;height:17px;background:#262626"></div>
<div class="a" style="left:1047px;top:26px;width:234px;height:1px;background:#1e1e1e"></div>
<div class="a" style="left:1047px;top:27px;width:234px;height:1px;background:#525252"></div>
<div class="t b" style="left:988px;top:13px;color:#dedede">Properties</div>
<div class="t b" style="left:1054px;top:13px;color:#a8a8a8;letter-spacing:-0.2px">Library</div>
<svg style="left:1265px;top:14px" width="11" height="9"><path d="M0 0.5H10M0 2.5H10M0 4.5H10M0 6.5H10" stroke="#000" stroke-width="1"/><path d="M0 1.5H10M0 3.5H10M0 5.5H10M0 7.5H10" stroke="#d0d0d0" stroke-width="1"/></svg>
<div class="t b" style="left:1054px;top:40px;color:#d4d4d4">Frame</div>
<svg style="left:1009px;top:50px" width="18" height="19">
 <rect x="1.5" y="3" width="4.5" height="12" fill="#5a5a5a"/><rect x="6" y="3" width="4.5" height="12" fill="#c0c0c0"/><rect x="11" y="3" width="4.5" height="12" fill="#5a5a5a"/>
 <path d="M0 2.5H17M0 15.5H17M1 2.5V15.5M16 2.5V15.5M8.5 0V18" stroke="#d6d6d6" stroke-width="1"/>
 <rect x="2.5" y="11.5" width="2" height="2" fill="#ddd"/><rect x="12.5" y="11.5" width="2" height="2" fill="#ddd"/><rect x="7.7" y="11.5" width="1.6" height="2" fill="#333"/>
</svg>
<svg style="left:1258px;top:36px" width="18" height="18">
 <circle cx="8.8" cy="8.9" r="7.4" fill="none" stroke="#cfcfcf" stroke-width="1.4"/>
 <path d="M5.5 12.2L11.8 5.9" stroke="#d0d0d0" stroke-width="2"/>
 <path d="M6.3 4.8H12.8V11.3H10.8V6.8H6.3Z" fill="#d4d4d4"/>
</svg>
<!-- Label section -->
<div class="a" style="left:981px;top:90px;width:300px;height:1px;background:#1c1c1c"></div>
<div class="a" style="left:981px;top:91px;width:300px;height:17px;background:#3f3f3f"></div>
<div class="a" style="left:983px;top:91px;width:297px;height:5px;background:#4e4e4e"></div>
<div class="a" style="left:981px;top:108px;width:300px;height:2px;background:#1c1c1c"></div>
<svg style="left:986px;top:98px" width="10" height="6"><path d="M0 0H9L4.5 5.5Z" fill="#cfcfcf"/></svg>
<div class="t b" style="left:1001px;top:95px;color:#d0d0d0">Label</div>
<div class="t b" style="left:1000px;width:47px;text-align:right;top:122px;color:#c8c8c8">Name:</div>
<div class="a" style="left:1053px;top:118px;width:197px;height:17px;background:#a3a3a3;border:1px solid #0e0e0e"></div>
<div class="t b" style="left:1000px;width:47px;text-align:right;top:148px;color:#c8c8c8">Type:</div>
<div class="a" style="left:1053px;top:145px;width:197px;height:17px;background:#434343;border:1px solid #3a3a3a"></div>
<div class="t" style="left:1060px;top:148px;color:#7a7a7a">Name</div>
<div class="a" style="left:1231px;top:147px;width:1px;height:12px;border-left:1px dashed #5e5e5e"></div>
<svg style="left:1236px;top:151px" width="9" height="5"><path d="M0 0H8.5L4.25 4.5Z" fill="#6a6a6a"/></svg>
<!-- Sound section -->
<div class="a" style="left:981px;top:171px;width:300px;height:1px;background:#1c1c1c"></div>
<div class="a" style="left:981px;top:172px;width:300px;height:17px;background:#3f3f3f"></div>
<div class="a" style="left:983px;top:172px;width:297px;height:5px;background:#4e4e4e"></div>
<div class="a" style="left:981px;top:189px;width:300px;height:2px;background:#1c1c1c"></div>
<svg style="left:986px;top:179px" width="10" height="6"><path d="M0 0H9L4.5 5.5Z" fill="#cfcfcf"/></svg>
<div class="t b" style="left:1001px;top:176px;color:#d0d0d0">Sound</div>
<div class="t b" style="left:1000px;width:48px;text-align:right;top:203px;color:#c8c8c8">Name:</div>
<div class="a" style="left:1055px;top:200px;width:195px;height:17px;background:linear-gradient(#505050 0,#4a4a4a 3px,#3e3e3e 4px,#3e3e3e);border:1px solid #151515"></div>
<div class="a" style="left:1231px;top:202px;width:1px;height:13px;background:#1c1c1c"></div>
<svg style="left:1236px;top:205px" width="10" height="6"><path d="M0 0H9.5L4.75 5.5Z" fill="#e4e4e4"/></svg>
<div class="t" style="left:1062px;top:204px;color:#e4e4e4">None</div>
<div class="a" style="left:981px;top:220px;width:300px;height:1px;background:#353535"></div>
<div class="a" style="left:981px;top:221px;width:300px;height:1px;background:#4c4c4c"></div>
<div class="t b" style="left:1000px;width:48px;text-align:right;top:230px;color:#c8c8c8">Effect:</div>
<div class="a" style="left:1055px;top:224px;width:165px;height:18px;background:#434343;border:1px solid #3a3a3a"></div>
<div class="t" style="left:1062px;top:228px;color:#7a7a7a">None</div>
<div class="a" style="left:1201px;top:227px;width:1px;height:12px;border-left:1px dashed #5e5e5e"></div>
<svg style="left:1206px;top:231px" width="9" height="5"><path d="M0 0H8.5L4.25 4.5Z" fill="#6a6a6a"/></svg>
<svg style="left:1232px;top:227px" width="14" height="13"><path d="M1 12L2.5 8L9.5 1.2C10.5 0.3 12 0.3 12.8 1.2C13.6 2 13.5 3.3 12.6 4.2L5.5 11Z" fill="#666"/><path d="M1 12L2.5 8L5.5 11Z" fill="#888"/></svg>
<div class="a" style="left:981px;top:248px;width:300px;height:1px;background:#353535"></div>
<div class="a" style="left:981px;top:249px;width:300px;height:1px;background:#4c4c4c"></div>
<div class="t b" style="left:1000px;width:48px;text-align:right;top:260px;color:#c8c8c8">Sync:</div>
<div class="a" style="left:1055px;top:254px;width:195px;height:18px;background:#434343;border:1px solid #3a3a3a"></div>
<div class="t" style="left:1062px;top:258px;color:#7a7a7a">Event</div>
<div class="a" style="left:1231px;top:257px;width:1px;height:12px;border-left:1px dashed #5e5e5e"></div>
<svg style="left:1236px;top:261px" width="9" height="5"><path d="M0 0H8.5L4.25 4.5Z" fill="#6a6a6a"/></svg>
<div class="a" style="left:1055px;top:277px;width:133px;height:18px;background:#434343;border:1px solid #3a3a3a"></div>
<div class="t" style="left:1062px;top:281px;color:#7a7a7a">Repeat</div>
<div class="a" style="left:1169px;top:280px;width:1px;height:12px;border-left:1px dashed #5e5e5e"></div>
<svg style="left:1174px;top:284px" width="9" height="5"><path d="M0 0H8.5L4.25 4.5Z" fill="#6a6a6a"/></svg>
<div class="t b" style="left:1198px;top:283px;color:#d0d0d0">x</div>
<div class="t" style="left:1213px;top:283px;color:#8a8a8a">1</div>
<div class="a" style="left:1213px;top:294px;width:7px;height:1px;border-top:1px dotted #8a8a8a"></div>
<div class="a" style="left:981px;top:302px;width:300px;height:1px;background:#353535"></div>
<div class="a" style="left:981px;top:303px;width:300px;height:1px;background:#4c4c4c"></div>
<div class="t b" style="left:1054px;top:309px;color:#d4d4d4">No sound selected</div>
<!-- cursor -->
<svg style="left:1034px;top:321px" width="24" height="30">
 <circle cx="10.7" cy="10.6" r="9.5" fill="none" stroke="#000" stroke-width="2.6"/>
 <circle cx="10.7" cy="10.6" r="9.5" fill="none" stroke="#fff" stroke-width="1.2"/>
 <path d="M8.5 11V25L11.8 22L14.3 27.5L16.6 26.4L14.2 21H18.5Z" fill="#000" stroke="#fff" stroke-width="1.1" stroke-linejoin="round"/>
</svg>
<div class="a" style="left:1281px;top:10px;width:1px;height:771px;background:#1e1e1e"></div>
<div class="a" style="left:1282px;top:10px;width:1px;height:771px;background:#343434"></div>
<div class="a" style="left:1283px;top:10px;width:1px;height:771px;background:#222"></div>
<!-- ========== TOOLS ========== -->
<div class="a" style="left:1284px;top:10px;width:34px;height:771px;background:#464646"></div>
<div class="a" style="left:1284px;top:10px;width:34px;height:17px;background:#2f2f2f"></div>
<div class="a" style="left:1284px;top:26px;width:34px;height:1px;background:#1e1e1e"></div>
<div class="a" style="left:1284px;top:27px;width:34px;height:1px;background:#525252"></div>
<svg style="left:1305px;top:14px" width="11" height="9"><path d="M0 0.5H10M0 2.5H10M0 4.5H10M0 6.5H10" stroke="#000" stroke-width="1"/><path d="M0 1.5H10M0 3.5H10M0 5.5H10M0 7.5H10" stroke="#d0d0d0" stroke-width="1"/></svg>
<div class="a" style="left:1286px;top:171px;width:32px;height:1px;background:#2e2e2e"></div>
<div class="a" style="left:1286px;top:172px;width:32px;height:1px;background:#4e4e4e"></div>
<div class="a" style="left:1286px;top:427px;width:32px;height:1px;background:#2e2e2e"></div>
<div class="a" style="left:1286px;top:428px;width:32px;height:1px;background:#4e4e4e"></div>
<div class="a" style="left:1286px;top:599px;width:32px;height:1px;background:#2e2e2e"></div>
<div class="a" style="left:1286px;top:600px;width:32px;height:1px;background:#4e4e4e"></div>
<div class="a" style="left:1286px;top:690px;width:32px;height:1px;background:#2e2e2e"></div>
<div class="a" style="left:1286px;top:691px;width:32px;height:1px;background:#4e4e4e"></div>
<!-- corner tris -->
<svg style="left:1313px;top:108px" width="4" height="4"><path d="M3.5 0V3.5H0Z" fill="#bbb"/></svg>
<svg style="left:1313px;top:136px" width="4" height="4"><path d="M3.5 0V3.5H0Z" fill="#888"/></svg>
<svg style="left:1313px;top:165px" width="4" height="4"><path d="M3.5 0V3.5H0Z" fill="#bbb"/></svg>
<svg style="left:1313px;top:195px" width="4" height="4"><path d="M3.5 0V3.5H0Z" fill="#bbb"/></svg>
<svg style="left:1313px;top:307px" width="4" height="4"><path d="M3.5 0V3.5H0Z" fill="#bbb"/></svg>
<svg style="left:1313px;top:452px" width="4" height="4"><path d="M3.5 0V3.5H0Z" fill="#bbb"/></svg>
<svg style="left:1313px;top:654px" width="4" height="4"><path d="M3.5 0V3.5H0Z" fill="#bbb"/></svg>
<!-- selection -->
<svg style="left:1296px;top:36px" width="12" height="17"><path d="M0.8 0.8V13L3.8 10.3L6.3 15.5L8.6 14.5L6.3 9.5H10.8Z" fill="#222" stroke="#d0d0d0" stroke-width="1.1" stroke-linejoin="round"/></svg>
<!-- subselection -->
<svg style="left:1297px;top:63px" width="12" height="18"><path d="M0.8 0.8V13L3.8 10.3L6.3 16.3L8.8 15.2L6.3 9.5H10.8Z" fill="#bdbdbd"/></svg>
<!-- free transform -->
<svg style="left:1293px;top:92px" width="19" height="14">
 <path d="M5.5 2.8H16M16 3V12.3M16 12.3H5.5" fill="none" stroke="#bdbdbd" stroke-width="0.8" stroke-dasharray="1 1"/>
 <rect x="4.8" y="2.2" width="1.6" height="1.6" fill="#d0d0d0"/><rect x="10.2" y="2.2" width="1.6" height="1.6" fill="#d0d0d0"/><rect x="15.3" y="2.2" width="1.6" height="1.6" fill="#d0d0d0"/>
 <rect x="15.3" y="7.3" width="1.6" height="1.6" fill="#d0d0d0"/>
 <rect x="4.8" y="11.6" width="1.6" height="1.6" fill="#d0d0d0"/><rect x="10.2" y="11.6" width="1.6" height="1.6" fill="#d0d0d0"/><rect x="15.3" y="11.6" width="1.6" height="1.6" fill="#d0d0d0"/>
 <path d="M1 0.6L9 8.6L5.2 9L1.6 12Z" fill="#c0c0c0"/>
</svg>
<!-- 3D rotation (dim) -->
<svg style="left:1294px;top:119px" width="17" height="17">
 <path d="M1 8.5A7.5 7.5 0 0 1 16 8.5Z" fill="#555"/>
 <ellipse cx="8.5" cy="8.8" rx="7.3" ry="3" fill="none" stroke="#666" stroke-width="1.2"/>
 <path d="M8.5 1.2C6 3 5.5 7 6 10.5C6.5 13.5 8 15.5 8.5 15.8C11.5 14.5 13 12 13.5 9" fill="none" stroke="#666" stroke-width="1.2"/>
 <path d="M1.5 9.5C2.5 13 5.5 15.8 8.5 15.8C11.5 15.8 14.5 13 15.5 9.5" fill="none" stroke="#606060" stroke-width="1.1"/>
</svg>
<!-- lasso -->
<svg style="left:1293px;top:146px" width="18" height="19">
 <ellipse cx="9.5" cy="7" rx="7.6" ry="4.6" transform="rotate(-14 9.5 7)" fill="none" stroke="#c8c8c8" stroke-width="1.2"/>
 <path d="M3.8 10.5C2.2 10.8 1.8 12.8 3.2 13.2C4.5 13.5 5 12 3.8 11.5C3 11.3 3.5 14 4.5 14.5C5.2 15 4.8 16.5 4.2 17" fill="none" stroke="#c8c8c8" stroke-width="1.1"/>
</svg>
<!-- pen -->
<svg style="left:1294px;top:179px" width="18" height="18">
 <path d="M11.5 0.8L17 6.3L14.3 8L9.8 3.5Z" fill="#c8c8c8"/>
 <path d="M9.3 4L13.8 8.5L11 14L0.8 17L3.8 7Z" fill="#bdbdbd"/>
 <path d="M0.8 17L6.5 11.3" stroke="#3a3a3a" stroke-width="1"/><circle cx="7.3" cy="10.5" r="1.3" fill="#3a3a3a"/>
</svg>
<!-- T -->
<svg style="left:1296px;top:207px" width="13" height="16">
 <path d="M0.8 0.8H12.2V4.5H11.4L11 2H7.3V13.5L9 14.2V15H4V14.2L5.7 13.5V2H2L1.6 4.5H0.8Z" fill="#c4c4c4"/>
</svg>
<!-- line -->
<svg style="left:1294px;top:235px" width="16" height="17"><path d="M1 16L15 1" stroke="#c0c0c0" stroke-width="1.6"/></svg>
<!-- rect selected -->
<div class="a" style="left:1287px;top:260px;width:30px;height:24px;background:#2b2b2b;border:1px solid #0e0e0e"></div>
<svg style="left:1294px;top:265px" width="16" height="14">
 <defs><linearGradient id="rg" x1="0" y1="0" x2="0" y2="1"><stop offset="0" stop-color="#8a8a8a"/><stop offset="1" stop-color="#666"/></linearGradient></defs>
 <rect x="1" y="1" width="14" height="12" fill="url(#rg)" stroke="#cfcfcf" stroke-width="1.2"/>
</svg>
<svg style="left:1313px;top:279px" width="4" height="4"><path d="M3.5 0V3.5H0Z" fill="#bbb"/></svg>
<!-- oval -->
<svg style="left:1293px;top:293px" width="17" height="14"><ellipse cx="8.5" cy="7" rx="7.6" ry="5.8" fill="#7a7a7a" stroke="#c4c4c4" stroke-width="1.2"/></svg>
<!-- polystar -->
<svg style="left:1293px;top:320px" width="17" height="15"><path d="M4.5 1H12.5L16 7.2L12.5 13.5H4.5L1 7.2Z" fill="#707070" stroke="#c4c4c4" stroke-width="1.2"/></svg>
<!-- pencil -->
<svg style="left:1293px;top:347px" width="17" height="18">
 <path d="M3.5 11L12 2.5C13 1.5 14.5 1.5 15.3 2.4C16.2 3.3 16.2 4.7 15.2 5.6L6.7 14Z" fill="#bdbdbd"/>
 <path d="M3.5 11L6.7 14L0.8 16.8Z" fill="#9a9a9a"/><path d="M4.5 10L11 3.5L13.8 6.3L7.5 12.8Z" fill="#8a8a8a"/>
</svg>
<!-- paint brush (curl) -->
<svg style="left:1291px;top:374px" width="22" height="18">
 <path d="M10.5 12L19.8 2" stroke="#c4c4c4" stroke-width="2.3" stroke-linecap="round"/>
 <path d="M5.5 15.8C5.5 13.2 8.3 11 10.8 11.8C12.6 12.6 12 15.5 9.5 16.2C8 16.6 6.5 16.5 5.5 15.8Z" fill="#bdbdbd"/>
 <path d="M9.8 2.3C10.8 4.8 8 5.8 5.5 7C2.5 8.5 0.8 11 2.3 13.5C3.3 15 5 15.5 6.5 15.3" fill="none" stroke="#bdbdbd" stroke-width="1.2"/>
</svg>
<!-- brush -->
<svg style="left:1292px;top:402px" width="20" height="18">
 <path d="M10.5 10.5L18.3 2" stroke="#c4c4c4" stroke-width="2.3" stroke-linecap="round"/>
 <path d="M0.8 16.3C3 16 5 13.5 7 11.8C8.8 10.5 11 11.3 10.6 13.5C10.2 15.8 6.5 17 0.8 16.3Z" fill="#bdbdbd"/>
</svg>
<!-- bone -->
<svg style="left:1293px;top:435px" width="17" height="18">
 <path d="M5 13L12 5" stroke="#bdbdbd" stroke-width="3.6"/>
 <circle cx="11.5" cy="2.8" r="2.3" fill="#bdbdbd"/><circle cx="14.2" cy="5.5" r="2.3" fill="#bdbdbd"/>
 <circle cx="2.8" cy="12.5" r="2.3" fill="#bdbdbd"/><circle cx="5.5" cy="15.2" r="2.3" fill="#bdbdbd"/>
</svg>
<!-- paint bucket -->
<svg style="left:1292px;top:461px" width="20" height="20">
 <ellipse cx="8.3" cy="5" rx="1.9" ry="3.6" fill="none" stroke="#c8c8c8" stroke-width="1.2"/>
 <path d="M1.5 12.5L7.8 7.2C8.7 6.5 9.8 6.5 10.7 7.2L15.3 11C15.9 11.6 15.9 12.6 15.3 13.1L9.5 18.3C8.5 19.2 7 19.2 6 18.3L2 14.8C1.2 14.2 1 13.2 1.5 12.5Z" fill="#bdbdbd"/>
 <path d="M3.2 12.2L8.8 7.6L14 11.6L8.5 16.2Z" fill="#a6a6a6"/>
 <path d="M13.8 9.3C16.3 9.8 17.5 12.3 17.4 15" fill="none" stroke="#bdbdbd" stroke-width="1.5"/>
 <circle cx="17.3" cy="16.2" r="1.6" fill="#bdbdbd"/>
</svg>
<!-- ink bottle -->
<svg style="left:1291px;top:490px" width="21" height="20">
 <ellipse cx="6.5" cy="4" rx="1.5" ry="2.9" fill="none" stroke="#c8c8c8" stroke-width="1.1"/>
 <path d="M1 9.8L5.8 5.8C6.5 5.2 7.5 5.2 8.2 5.8L11.6 8.7C12.1 9.2 12.1 10 11.6 10.4L7.2 14.3C6.5 15 5.3 15 4.5 14.3L1.5 11.6C0.9 11.1 0.7 10.4 1 9.8Z" fill="#bdbdbd"/>
 <path d="M10.5 7.3C12.3 7.8 13 9.5 13 11" fill="none" stroke="#bdbdbd" stroke-width="1.2"/>
 <path d="M14.5 9.5H19.5V18.5H11" fill="none" stroke="#c8c8c8" stroke-width="1.6"/>
 <path d="M11.5 12.5L14.5 9.5L14.5 13Z" fill="#c8c8c8"/>
</svg>
<!-- eyedropper -->
<svg style="left:1294px;top:519px" width="17" height="17">
 <path d="M10.5 3.2L12.3 1.2C13.3 0.2 15 0.3 15.8 1.2C16.6 2.1 16.5 3.6 15.6 4.5L13.6 6.3Z" fill="#c8c8c8"/>
 <path d="M9 4.5L12.3 7.8" stroke="#c8c8c8" stroke-width="2.2"/>
 <path d="M10 6.3L3 13.3L1.2 16L3.8 14.3L10.8 7.2" fill="none" stroke="#c8c8c8" stroke-width="1.1"/>
</svg>
<!-- eraser -->
<svg style="left:1294px;top:547px" width="18" height="16">
 <path d="M4.5 5.5L9.5 1.3H17.3L12.5 5.5Z" fill="#cdcdcd"/>
 <path d="M12.5 5.5L17.3 1.3C17.5 4 17.3 7.5 15.8 9L12 13.5C12.8 10.5 13 8 12.5 5.5Z" fill="#8e8e8e"/>
 <path d="M4.5 5.5H12.5C13.2 8.3 13 11 12 14H2.5C1 14 0.8 12.5 1 10.5C1.3 8 2.5 6.3 4.5 5.5Z" fill="#acacac"/>
 <path d="M2 8.5C3 7 4 6.3 5 6H12.5" fill="none" stroke="#c8c8c8" stroke-width="0.8"/>
</svg>
<!-- width tool -->
<svg style="left:1291px;top:575px" width="21" height="17">
 <path d="M4.3 3.2C4.5 1.2 6.5 0.3 7.8 1.7C6.5 2.3 6.3 3.8 7 5.8C7.8 8.5 8.3 10 10.3 11C12.5 12 14 10 15.5 8.3C16.8 7 18.5 7.5 19.5 9C20.2 10.3 20 12.5 19.5 13.5C19 11.5 18 10.5 17 11.5C15.5 13.5 13 15.5 10.2 14.8C7 14 5 10.5 4.5 7.5C4.3 6 4.2 4.5 4.3 3.2Z" fill="#bdbdbd"/>
 <path d="M3 15L13.3 4.5" stroke="#e0e0e0" stroke-width="0.9" stroke-dasharray="1.3 0.8"/>
 <circle cx="8.2" cy="9.7" r="2.1" fill="#3a3a3a" stroke="#e8e8e8" stroke-width="1.3"/>
 <circle cx="2.8" cy="15.2" r="1.4" fill="#3a3a3a" stroke="#e0e0e0" stroke-width="0.9"/>
 <circle cx="13.6" cy="4.3" r="1.4" fill="#3a3a3a" stroke="#e0e0e0" stroke-width="0.9"/>
</svg>
<!-- camera -->
<svg style="left:1292px;top:608px" width="20" height="14">
 <rect x="1" y="2" width="11" height="11" rx="1.5" fill="#bdbdbd"/>
 <path d="M12 6L18.5 2.5V12L12 9Z" fill="#bdbdbd"/>
</svg>
<!-- hand -->
<svg style="left:1293px;top:634px" width="18" height="19">
 <g stroke="#bdbdbd" stroke-linecap="round" stroke-width="2.1">
  <path d="M5.3 11L4.9 5.5M8.2 10L8.2 2.3M11 10L11.4 3.5M13.6 11L15.3 6.2M5.5 13.5L1.6 10.2"/>
 </g>
 <path d="M3.8 10.5H15L13.3 15.5V18H6V16Z" fill="#bdbdbd"/>
 <path d="M6 14.5H13.5V18H6Z" fill="#a8a8a8"/>
</svg>
<!-- zoom -->
<svg style="left:1293px;top:662px" width="18" height="18">
 <circle cx="7.3" cy="7" r="5.3" fill="#6e6e6e" stroke="#c4c4c4" stroke-width="1.5"/>
 <path d="M4.5 6A3 3 0 0 1 7.5 3.5" fill="none" stroke="#8a8a8a" stroke-width="1.2"/>
 <path d="M11 10.7L16 15.8" stroke="#c4c4c4" stroke-width="2.4" stroke-linecap="round"/>
</svg>
<!-- stroke color -->
<div class="a" style="left:1292px;top:698px;width:20px;height:18px;background:#3a3a3a;border:1px solid #0a0a0a"></div>
<svg style="left:1295px;top:700px" width="15" height="14">
 <path d="M3 10L10.5 2.5C11.5 1.5 12.8 1.5 13.5 2.3C14.2 3 14.2 4.2 13.3 5L5.8 12.5Z" fill="#d8d8d8"/>
 <path d="M3 10L5.8 12.5L1 13.5Z" fill="#e8e8e8"/><path d="M4.2 8.8L9.5 3.5L11.8 5.8L6.6 11Z" fill="#9a9a9a"/>
</svg>
<div class="a" style="left:1292px;top:719px;width:20px;height:20px;background:#330000;border:1px solid #262626"></div>
<!-- fill bucket -->
<svg style="left:1293px;top:749px" width="17" height="16">
 <ellipse cx="7" cy="4" rx="1.6" ry="3" fill="none" stroke="#c8c8c8" stroke-width="1.1"/>
 <path d="M1.2 10L6.2 5.8C6.9 5.2 7.9 5.2 8.6 5.8L12.2 8.8C12.7 9.3 12.7 10.1 12.2 10.6L7.6 14.6C6.9 15.3 5.7 15.3 4.9 14.6L1.7 11.8C1.1 11.3 0.9 10.6 1.2 10Z" fill="#bdbdbd"/>
 <path d="M11 7.5C13 8 14 10 13.9 12.3" fill="none" stroke="#bdbdbd" stroke-width="1.3"/>
 <circle cx="13.8" cy="13.3" r="1.3" fill="#bdbdbd"/>
</svg>
<div class="a" style="left:1292px;top:769px;width:20px;height:12px;background:#000;border:1px solid #262626;border-bottom:none"></div>
</body></html>
